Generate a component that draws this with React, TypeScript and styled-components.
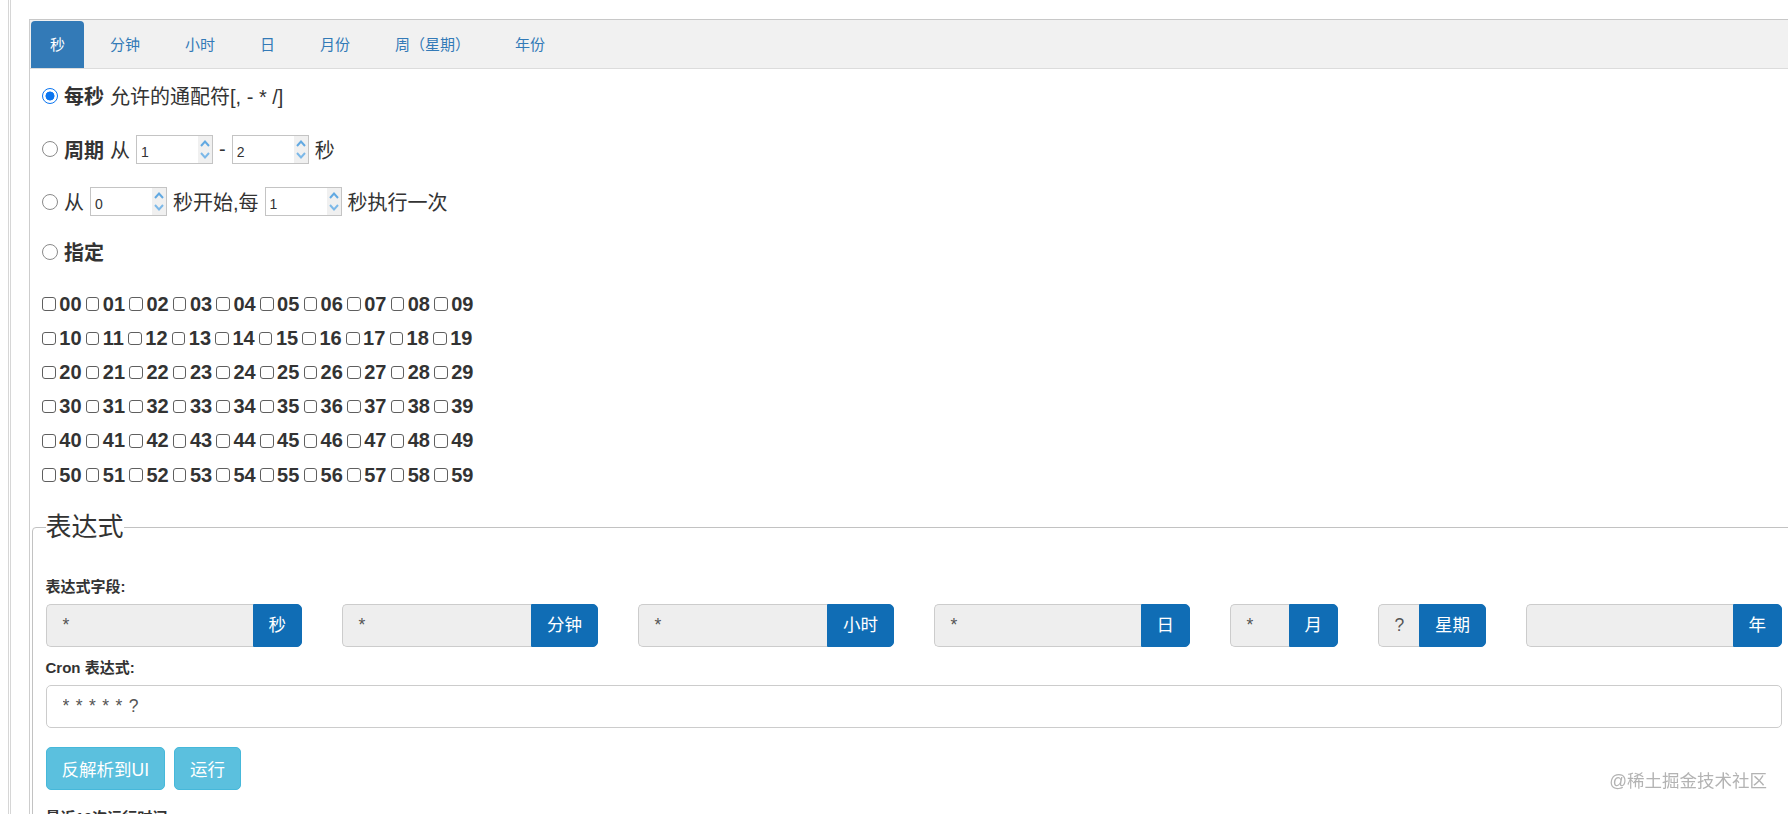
import React from "react";
import styled, { createGlobalStyle } from "styled-components";

const GlobalStyle = createGlobalStyle`
  html, body {
    margin: 0;
    padding: 0;
    background: #fff;
    overflow: hidden;
  }
  body {
    font-family: "Liberation Sans", "Noto Sans CJK SC", sans-serif;
    color: #333;
  }
`;

const TABS = ["秒", "分钟", "小时", "日", "月份", "周（星期）", "年份"];

const FIELDS = [
  { value: "*", unit: "秒", span: 2 },
  { value: "*", unit: "分钟", span: 2 },
  { value: "*", unit: "小时", span: 2 },
  { value: "*", unit: "日", span: 2 },
  { value: "*", unit: "月", span: 1 },
  { value: "?", unit: "星期", span: 1 },
  { value: "", unit: "年", span: 2 },
];

const pad = (n: number) => (n < 10 ? `0${n}` : `${n}`);

const Spinner = () => (
  <SpinBox>
    <svg width="14" height="27" viewBox="0 0 14 27">
      <path d="M3 10 L7 5.5 L11 10" fill="none" stroke="#62a9e2" strokeWidth="2" />
      <path d="M3 17 L7 21.5 L11 17" fill="none" stroke="#7cb8e8" strokeWidth="2" />
    </svg>
  </SpinBox>
);

const NumberBox: React.FC<{ value: string }> = ({ value }) => (
  <NumWrap>
    <NumInput defaultValue={value} />
    <Spinner />
  </NumWrap>
);

const App: React.FC = () => {
  return (
    <Page>
      <GlobalStyle />
      <Frame>
        <Panel>
          <TabBar>
            {TABS.map((t, i) => (
              <Tab key={t} active={i === 0}>
                {t}
              </Tab>
            ))}
          </TabBar>

          <TabContent>
            <OptionRow h={53}>
              <Radio type="radio" name="second" defaultChecked />
              <b>每秒</b>
              <span>允许的通配符[, - * /]</span>
            </OptionRow>
            <OptionRow h={54}>
              <Radio type="radio" name="second" />
              <b>周期</b>
              <span>从</span>
              <NumberBox value="1" />
              <span>-</span>
              <NumberBox value="2" />
              <span>秒</span>
            </OptionRow>
            <OptionRow h={51}>
              <Radio type="radio" name="second" />
              <span>从</span>
              <NumberBox value="0" />
              <span>秒开始,每</span>
              <NumberBox value="1" />
              <span>秒执行一次</span>
            </OptionRow>
            <OptionRow h={49}>
              <Radio type="radio" name="second" />
              <b>指定</b>
            </OptionRow>

            <CheckList>
              {Array.from({ length: 6 }).map((_, row) => (
                <CheckRow key={row}>
                  {Array.from({ length: 10 }).map((_, col) => {
                    const n = row * 10 + col;
                    return (
                      <CheckItem key={n}>
                        <Checkbox type="checkbox" />
                        {pad(n)}
                      </CheckItem>
                    );
                  })}
                </CheckRow>
              ))}
            </CheckList>
          </TabContent>

          <FieldSet>
            <Legend>表达式</Legend>
            <FormBody>
              <FieldLabel>表达式字段:</FieldLabel>
              <FieldGrid>
                {FIELDS.map((f) => (
                  <InputGroup key={f.unit} span={f.span}>
                    <ReadonlyInput>{f.value}</ReadonlyInput>
                    <Addon>{f.unit}</Addon>
                  </InputGroup>
                ))}
              </FieldGrid>

              <FieldLabel>Cron 表达式:</FieldLabel>
              <CronInput defaultValue="* * * * * ?" />

              <ButtonRow>
                <InfoButton>反解析到UI</InfoButton>
                <InfoButton>运行</InfoButton>
              </ButtonRow>

              <FieldLabel top={17}>最近10次运行时间:</FieldLabel>
            </FormBody>
          </FieldSet>
        </Panel>
      </Frame>
      <Watermark>@稀土掘金技术社区</Watermark>
    </Page>
  );
};

const Page = styled.div`
  width: 1830px;
  min-height: 100vh;
  padding-left: 8px;
  box-sizing: border-box;
`;

const Frame = styled.div`
  min-height: 100vh;
  border-left: 3px double #d6d6d6;
  padding: 19px 0 0 18px;
  box-sizing: border-box;
`;

const Panel = styled.div`
  min-height: 800px;
  border-top: 1px solid #c8c8c8;
  border-left: 1px solid #cdcdcd;
`;

const TabBar = styled.div`
  display: flex;
  gap: 7px;
  height: 47px;
  padding: 1px 1px 0;
  background: #f1f1f1;
  border-bottom: 1px solid #dcdcdc;
`;

const Tab = styled.div<{ active?: boolean }>`
  height: 47px;
  line-height: 47px;
  padding: 0 19px;
  font-size: 15px;
  color: ${(p) => (p.active ? "#fff" : "#337ab7")};
  background: ${(p) => (p.active ? "#337ab7" : "transparent")};
  border-radius: 4px 4px 0 0;
  white-space: nowrap;
  cursor: pointer;
`;

const TabContent = styled.div`
  padding: 0 12px;
`;

const OptionRow = styled.div<{ h: number }>`
  display: flex;
  align-items: center;
  gap: 6px;
  height: ${(p) => p.h}px;
  font-size: 20px;
  white-space: nowrap;

  b {
    font-weight: 700;
  }
`;

const Radio = styled.input`
  appearance: none;
  width: 16px;
  height: 16px;
  margin: 0;
  border: 1px solid #8a8a8a;
  border-radius: 50%;
  background: #fff;
  box-sizing: border-box;

  &:checked {
    border: 1.5px solid #0b75f0;
    background: radial-gradient(circle, #0b75f0 0 4.2px, #fff 4.8px);
  }
`;

const NumWrap = styled.span`
  display: inline-flex;
  width: 77px;
  height: 29px;
  border: 1px solid #c4c4c4;
  box-sizing: border-box;
  background: #fff;
`;

const NumInput = styled.input`
  flex: 1;
  min-width: 0;
  border: none;
  outline: none;
  padding: 5px 0 0 4px;
  font: 14px "Liberation Sans", sans-serif;
  color: #333;
  background: transparent;
`;

const SpinBox = styled.span`
  width: 14px;
  display: flex;
  align-items: center;
  background: #f0f0f0;
`;

const CheckList = styled.div`
  margin-top: 11px;
`;

const CheckRow = styled.div`
  display: flex;
  align-items: center;
  gap: 4px;
  height: 34.2px;
  font: 700 20px "Liberation Sans", sans-serif;
  color: #333;
`;

const CheckItem = styled.label`
  display: inline-flex;
  align-items: center;
`;

const Checkbox = styled.input`
  appearance: none;
  width: 13.5px;
  height: 13.5px;
  margin: 0 3.5px 0 0.3px;
  border: 1px solid #5f5f5f;
  border-radius: 3px;
  background: #fff;
  box-sizing: border-box;
`;

const FieldSet = styled.fieldset`
  width: 1763px;
  box-sizing: border-box;
  margin: 20px 0 0 2px;
  padding: 0 12.5px;
  border: 1px solid #c2c2c2;
  border-radius: 4px;
  min-width: 0;
`;

const Legend = styled.legend`
  padding: 0;
  font-size: 26px;
  line-height: 30px;
  color: #333;
`;

const FormBody = styled.div`
  padding-top: 33.5px;
`;

const FieldLabel = styled.label<{ top?: number }>`
  display: block;
  margin-top: ${(p) => p.top ?? 0}px;
  margin-bottom: 7px;
  font-size: 15px;
  font-weight: 700;
  line-height: 21px;
  color: #333;
`;

const FieldGrid = styled.div`
  display: grid;
  grid-template-columns: repeat(12, 108.5px);
  column-gap: 39.5px;
  margin-bottom: 10.5px;
`;

const InputGroup = styled.div<{ span: number }>`
  grid-column: span ${(p) => p.span};
  display: flex;
  height: 43px;
`;

const ReadonlyInput = styled.div`
  flex: 1;
  min-width: 0;
  padding: 0 16px;
  line-height: 41px;
  font-size: 17.5px;
  color: #555;
  background: #eee;
  border: 1px solid #ccc;
  border-right: none;
  border-radius: 5px 0 0 5px;
`;

const Addon = styled.div`
  padding: 0 15px;
  line-height: 41px;
  font-size: 17.5px;
  color: #fff;
  background: #106db5;
  border: 1px solid #106db5;
  border-radius: 0 5px 5px 0;
  white-space: nowrap;
`;

const CronInput = styled.input`
  display: block;
  width: 100%;
  height: 43px;
  box-sizing: border-box;
  padding: 0 16px;
  font-size: 17.5px;
  letter-spacing: 0.8px;
  font-family: "Liberation Sans", "Noto Sans CJK SC", sans-serif;
  color: #555;
  background: #fff;
  border: 1px solid #ccc;
  border-radius: 5px;
  outline: none;
`;

const ButtonRow = styled.div`
  display: flex;
  gap: 9px;
  margin-top: 18.5px;
`;

const InfoButton = styled.button`
  height: 43px;
  padding: 0 15px;
  font-size: 17.5px;
  font-family: "Liberation Sans", "Noto Sans CJK SC", sans-serif;
  color: #fff;
  background: #5bc0de;
  border: 1px solid #46b8da;
  border-radius: 5px;
  cursor: pointer;
`;

const Watermark = styled.div`
  position: fixed;
  right: 21px;
  top: 769px;
  font-size: 17.5px;
  line-height: 24px;
  color: #b3b3b3;
  pointer-events: none;
`;

export default App;
